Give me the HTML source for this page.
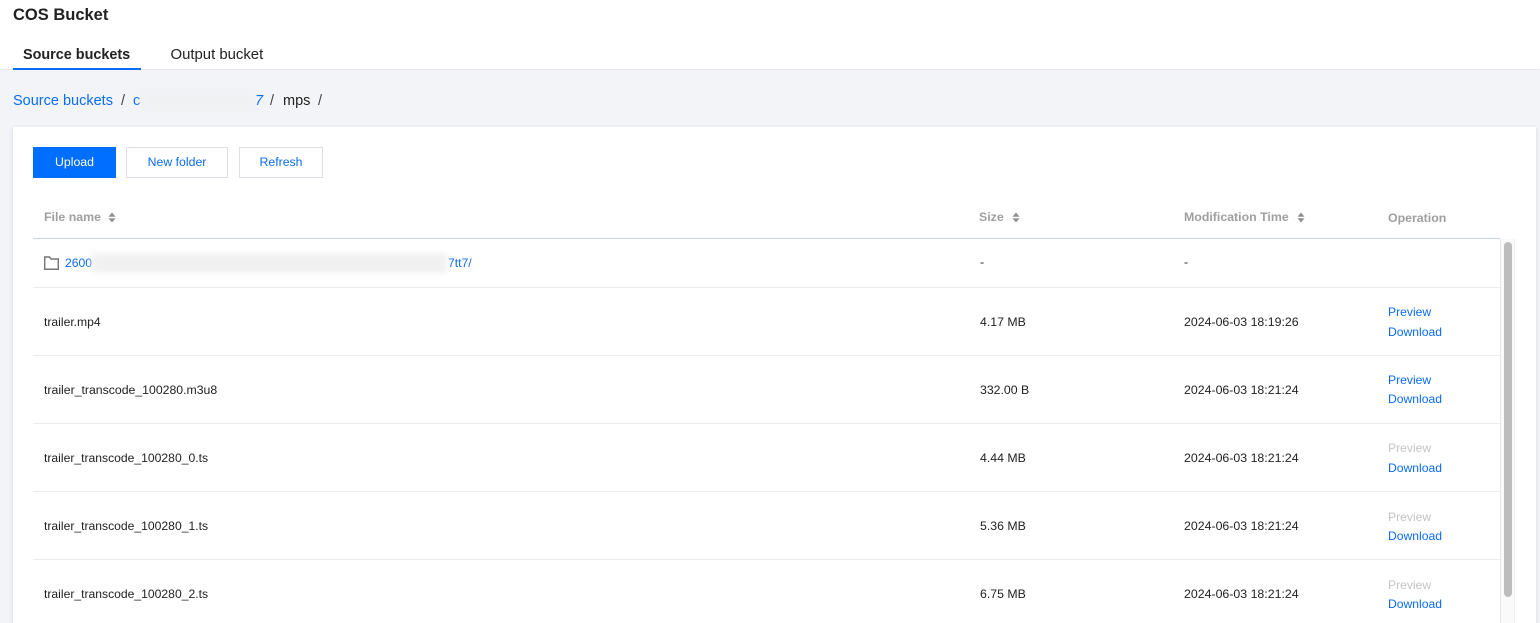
<!DOCTYPE html>
<html><head><meta charset="utf-8">
<style>
html,body{margin:0;padding:0}
body{width:1540px;height:623px;overflow:hidden;background:#f2f4f8;position:relative;font-family:"Liberation Sans",Arial,sans-serif;font-size:12px;color:#222}
#p{position:absolute;left:0;top:0;width:1540px;height:623px;overflow:hidden;filter:blur(.3px)}
.a{position:absolute;white-space:nowrap;line-height:16px;font-size:12.35px}
.f{font-size:12.15px}
.m{font-size:12.3px}
.l{color:#0b6cf5;font-size:12.15px}
.g{color:#8f8f8f;font-weight:bold;opacity:.85;font-size:12.35px}
.d{color:#c4c4c4;font-size:12.15px}
.b{font-size:14.5px}
.line{position:absolute;left:33px;width:1467px;height:1px;background:#e8ebf0}
.btn{position:absolute;top:147px;height:29px;border:1px solid #dcdfe6;background:#fff;color:#0b6cf5;text-align:center;line-height:29px;font-size:12.3px}
.blur{position:absolute;filter:blur(3px)}
svg{position:absolute}
</style></head><body><div id="p">
<div style="position:absolute;left:0;top:0;width:1540px;height:69px;background:#fff;box-shadow:0 1px 1px #e6e8ee"></div>
<div class="a" style="left:13px;top:6px;font-size:16.5px;font-weight:bold;line-height:18px;color:#222">COS Bucket</div>
<div class="a" style="left:23px;top:47px;font-size:14.4px;font-weight:bold;color:#222">Source buckets</div>
<div class="a" style="left:170.500px;top:47px;font-size:14.9px;color:#222">Output bucket</div>
<div style="position:absolute;left:13px;top:68px;width:128px;height:2px;background:#0b6cf5"></div>

<div class="a l b" style="left:13px;top:93px">Source buckets</div>
<div class="a b" style="left:121px;top:93px;color:#444">/</div>
<div class="a l b" style="left:133px;top:93px">c</div>
<div class="a l b" style="left:255px;top:93px;font-style:italic">7</div>
<div class="blur" style="left:141px;top:91px;width:113px;height:19px;background:#f0f1f3"></div>
<div class="a b" style="left:270px;top:93px;color:#444">/</div>
<div class="a b" style="left:283px;top:93px;color:#222">mps</div>
<div class="a b" style="left:318px;top:93px;color:#444">/</div>

<div style="position:absolute;left:13px;top:127px;width:1523px;height:500px;background:#fff;box-shadow:0 1px 4px rgba(40,60,90,.14)"></div>

<div class="btn" style="left:33px;width:83px;height:31px;line-height:31px;border:0;background:#006eff;color:#fff">Upload</div>
<div class="btn" style="left:126px;width:101px;box-sizing:content-box;width:100px">New folder</div>
<div class="btn" style="left:239px;width:82px">Refresh</div>

<div class="a g" style="left:44px;top:209px">File name</div>
<svg style="left:108px;top:212px" width="8" height="11" viewBox="0 0 8 11"><path d="M4 .5 7.500 4.800H.5zM4 10.500 .5 6.200h7z" fill="#8f8f8f"/></svg>
<div class="a g" style="left:979px;top:209px">Size</div>
<svg style="left:1012px;top:212px" width="8" height="11" viewBox="0 0 8 11"><path d="M4 .5 7.500 4.800H.5zM4 10.500 .5 6.200h7z" fill="#8f8f8f"/></svg>
<div class="a g" style="left:1184px;top:209px">Modification Time</div>
<svg style="left:1297px;top:212px" width="8" height="11" viewBox="0 0 8 11"><path d="M4 .5 7.500 4.800H.5zM4 10.500 .5 6.200h7z" fill="#8f8f8f"/></svg>
<div class="a g" style="left:1388px;top:210px">Operation</div>

<div class="line" style="top:238px;background:#ccd3e0"></div>
<svg style="left:44px;top:256px" width="15" height="14" viewBox="0 0 15 14"><path d="M.7 13.200V1H5.500L7 3H14.300V13.200Z" fill="none" stroke="#777" stroke-width="1.500"/></svg>
<div class="a l" style="left:65px;top:255px">2600</div>
<div class="a l" style="left:448px;top:255px">7tt7/</div>
<div class="blur" style="left:92px;top:253px;width:355px;height:20px;background:#f1f1f1"></div>
<div class="a" style="left:980px;top:254px">-</div>
<div class="a" style="left:1184px;top:254px">-</div>

<div class="line" style="top:287px"></div>
<div class="a f" style="left:44px;top:314px">trailer.mp4</div>
<div class="a m" style="left:980px;top:314px">4.17 MB</div>
<div class="a" style="left:1184px;top:314px">2024-06-03 18:19:26</div>
<div class="a l" style="left:1388px;top:304px">Preview</div>
<div class="a l" style="left:1388px;top:324px">Download</div>

<div class="line" style="top:355px"></div>
<div class="a" style="left:44px;top:382px;font-size:12.28px">trailer_transcode_100280.m3u8</div>
<div class="a m" style="left:980px;top:382px">332.00 B</div>
<div class="a" style="left:1184px;top:382px">2024-06-03 18:21:24</div>
<div class="a l" style="left:1388px;top:372px">Preview</div>
<div class="a l" style="left:1388px;top:391px">Download</div>

<div class="line" style="top:423px"></div>
<div class="a f" style="left:44px;top:450px">trailer_transcode_100280_0.ts</div>
<div class="a m" style="left:980px;top:450px">4.44 MB</div>
<div class="a" style="left:1184px;top:450px">2024-06-03 18:21:24</div>
<div class="a d" style="left:1388px;top:440px">Preview</div>
<div class="a l" style="left:1388px;top:460px">Download</div>

<div class="line" style="top:491px"></div>
<div class="a f" style="left:44px;top:518px">trailer_transcode_100280_1.ts</div>
<div class="a m" style="left:980px;top:518px">5.36 MB</div>
<div class="a" style="left:1184px;top:518px">2024-06-03 18:21:24</div>
<div class="a d" style="left:1388px;top:509px">Preview</div>
<div class="a l" style="left:1388px;top:528px">Download</div>

<div class="line" style="top:559px"></div>
<div class="a f" style="left:44px;top:586px">trailer_transcode_100280_2.ts</div>
<div class="a m" style="left:980px;top:586px">6.75 MB</div>
<div class="a" style="left:1184px;top:586px">2024-06-03 18:21:24</div>
<div class="a d" style="left:1388px;top:577px">Preview</div>
<div class="a l" style="left:1388px;top:596px">Download</div>

<div style="position:absolute;left:1500px;top:239px;width:15px;height:384px;background:#fafafa;border-left:1px solid #e8e8e8;border-right:1px solid #efefef;box-sizing:border-box"></div>
<div style="position:absolute;left:1504px;top:242px;width:8px;height:355px;background:#bdbdbd;border-radius:4px"></div>
</div></body></html>
